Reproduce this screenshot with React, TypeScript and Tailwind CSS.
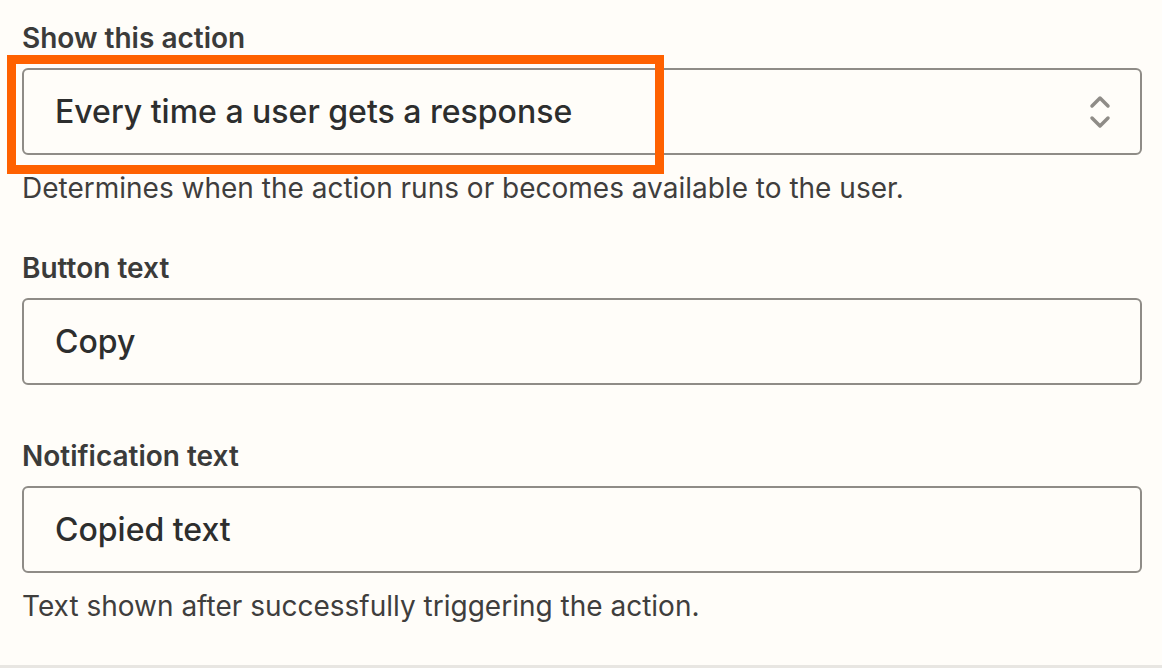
import { ReactNode } from 'react'

function Field({ label, children, hint, className = '' }: { label: string; children: ReactNode; hint?: string; className?: string }) {
  return (
    <div className={`flex flex-col ${className}`}>
      <label className="text-[28px] font-semibold leading-[34px] text-[#3b3b3a]">{label}</label>
      <div className="mt-[13px]">{children}</div>
      {hint && <p className="mt-[16px] text-[28px] leading-[34px] text-[#3f3e3d]">{hint}</p>}
    </div>
  )
}

function SelectChevrons() {
  return (
    <svg width="22" height="34" viewBox="0 0 22 34" fill="none" stroke="#8f8c87" strokeWidth="3.5" strokeLinecap="round" strokeLinejoin="round">
      <path d="M3 11 L11 3 L19 11" />
      <path d="M3 23 L11 31 L19 23" />
    </svg>
  )
}

export default function App() {
  return (
    <div className="h-[668px] w-[1162px] overflow-hidden bg-[#fffdf9] font-['Inter',sans-serif] flex flex-col">
      <div className="flex-1 pl-[22px] pr-[20px] pt-[21px] flex flex-col">
        <Field label="Show this action" hint="Determines when the action runs or becomes available to the user.">
          <div className="relative">
            <div className="h-[87px] rounded-[6px] border-2 border-[#8f8c87] flex items-center justify-between pl-[31px] pr-[29px]">
              <span className="text-[32px] font-medium text-[#2d2e2e]">Every time a user gets a response</span>
              <SelectChevrons />
            </div>
            <div className="absolute left-[-15px] top-[-13px] h-[119px] w-[657px] border-[9px] border-[#ff6100] pointer-events-none" />
          </div>
        </Field>
        <Field label="Button text" className="mt-[46px]">
          <div className="h-[87px] rounded-[6px] border-2 border-[#8f8c87] flex items-center pl-[31px]">
            <span className="text-[32px] font-medium text-[#2d2e2e]">Copy</span>
          </div>
        </Field>
        <Field label="Notification text" hint="Text shown after successfully triggering the action." className="mt-[54px]">
          <div className="h-[87px] rounded-[6px] border-2 border-[#8f8c87] flex items-center pl-[31px]">
            <span className="text-[32px] font-medium text-[#2d2e2e]">Copied text</span>
          </div>
        </Field>
      </div>
      <div className="h-[3px] bg-[#e8e6e2]" />
    </div>
  )
}
